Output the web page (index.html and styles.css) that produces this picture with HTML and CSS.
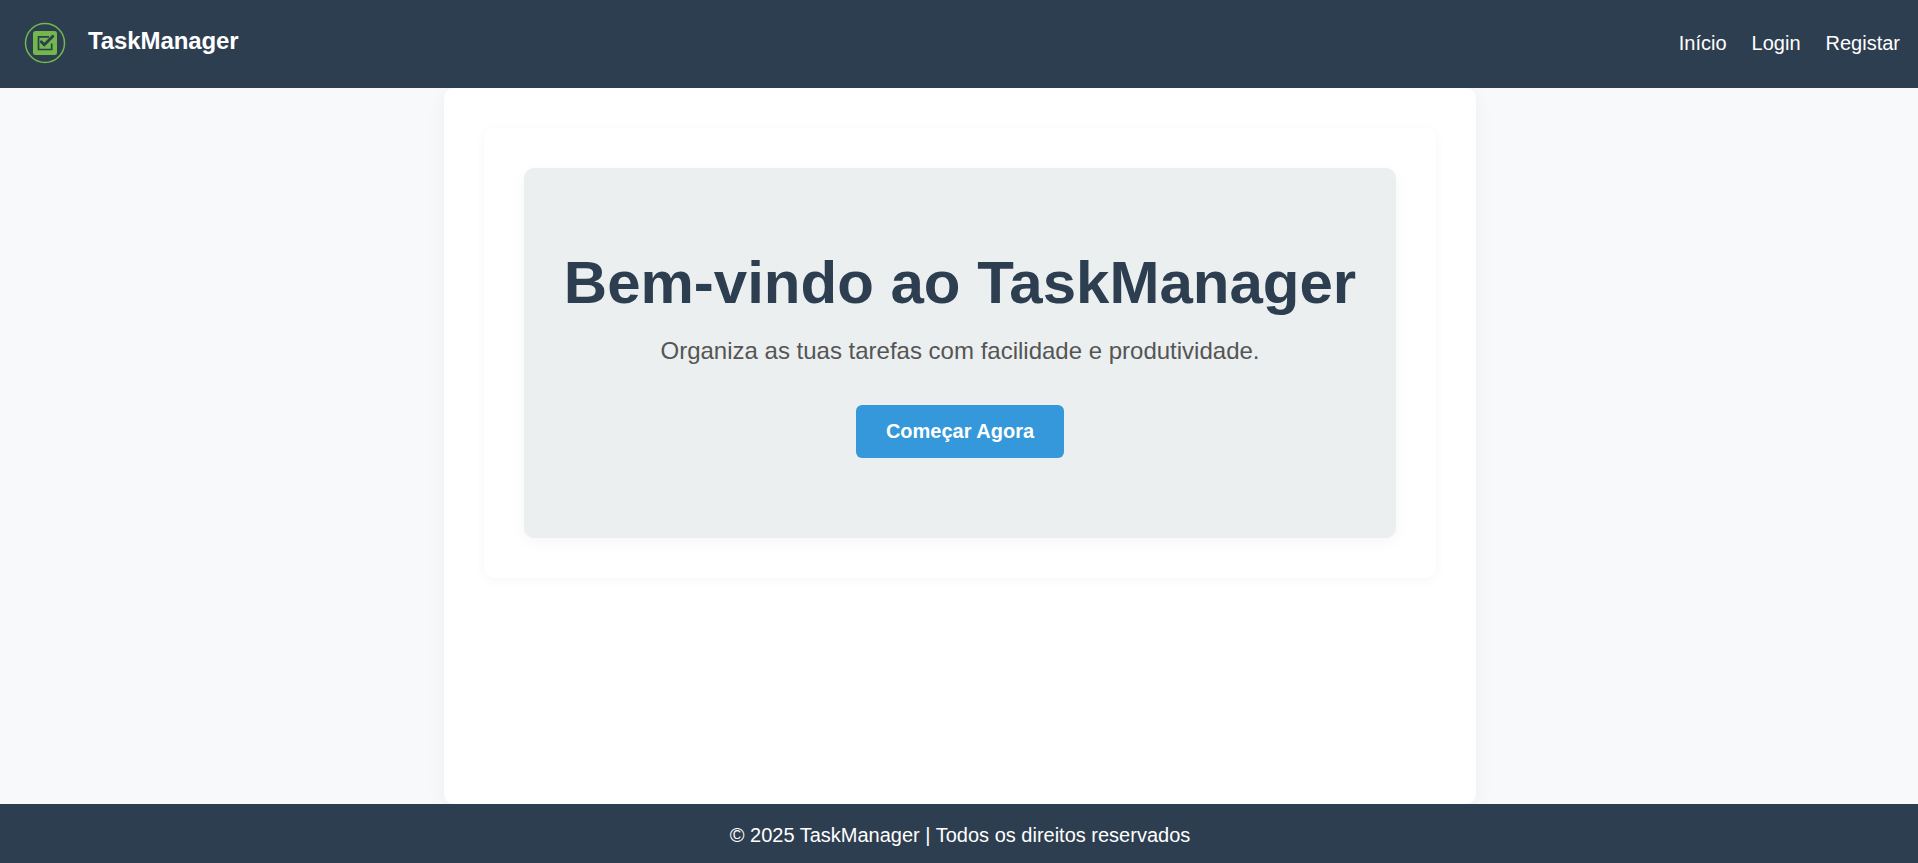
FILE: index.html
```html
<!DOCTYPE html>
<html lang="pt">
<head>
<meta charset="utf-8">
<title>TaskManager</title>
<link rel="stylesheet" href="styles.css">
</head>
<body>
<header class="header">
  <a class="brand" href="#">
    <svg class="logo" viewBox="0 0 42 42" fill="none">
      <circle cx="21" cy="21" r="19.5" stroke="#72b84a" stroke-width="1.5"/>
      <rect x="9" y="9" width="24" height="24" rx="2.5" fill="#72b84a"/>
      <path d="M25 14.8H14.5V27.5H27.7V21.5" stroke="#2d3e50" stroke-width="1.7"/>
      <path d="M17.2 19.8L20.3 22.8L28.8 14.2" stroke="#2d3e50" stroke-width="2.8" stroke-linecap="round"/>
    </svg>
    <span class="brand-name">TaskManager</span>
  </a>
  <nav class="nav">
    <a href="#">Início</a>
    <a href="#">Login</a>
    <a href="#">Registar</a>
  </nav>
</header>
<main class="main">
  <div class="card">
    <section class="hero">
      <h1>Bem-vindo ao TaskManager</h1>
      <p>Organiza as tuas tarefas com facilidade e produtividade.</p>
      <a class="button" href="#">Começar Agora</a>
    </section>
  </div>
</main>
<footer class="footer">© 2025 TaskManager | Todos os direitos reservados</footer>
</body>
</html>
```
FILE: styles.css
```css
* {
  box-sizing: border-box;
  margin: 0;
  padding: 0;
}

body {
  display: flex;
  flex-direction: column;
  min-height: 100vh;
  overflow: hidden;
  background: #f8f9fb;
  font: 20px/23px Arial, "Liberation Sans", sans-serif;
}

a {
  color: inherit;
  text-decoration: none;
}

.header {
  display: flex;
  justify-content: space-between;
  align-items: center;
  height: 88px;
  padding: 0 18px 2px 24px;
  background: #2d3e50;
  color: #fff;
  position: relative;
}

.brand {
  display: flex;
  align-items: center;
  gap: 22px;
}

.logo {
  width: 42px;
  height: 42px;
}

.brand-name {
  padding-bottom: 6px;
  font-size: 24px;
  line-height: 27px;
  font-weight: bold;
  letter-spacing: -0.1px;
}

.nav {
  display: flex;
  gap: 25px;
}

.main {
  flex: 1;
  align-self: center;
  width: 1032px;
  margin-left: 2px;
  padding: 40px;
  border-radius: 10px;
  background: #fff;
  box-shadow: 0 4px 20px rgba(0, 0, 0, 0.05);
}

.card {
  padding: 40px;
  border-radius: 10px;
  background: #fff;
  box-shadow: 0 2px 12px rgba(0, 0, 0, 0.04);
}

.hero {
  display: flex;
  flex-direction: column;
  align-items: center;
  padding: 80px 40px;
  border-radius: 10px;
  background: #ebeff0;
  box-shadow: 0 4px 16px rgba(0, 0, 0, 0.04);
  text-align: center;
}

.hero h1 {
  margin-bottom: 20px;
  color: #2c3e50;
  font-size: 60px;
  line-height: 69px;
  white-space: nowrap;
}

.hero p {
  margin-bottom: 41px;
  color: #555;
  font-size: 24px;
  line-height: 27px;
}

.button {
  padding: 15px 30px;
  border-radius: 6px;
  background: #3498db;
  color: #fff;
  font-weight: bold;
}

.footer {
  position: relative;
  height: 59px;
  padding: 20px 20px 20px 22px;
  background: #2d3e50;
  color: #fff;
  text-align: center;
}
```
